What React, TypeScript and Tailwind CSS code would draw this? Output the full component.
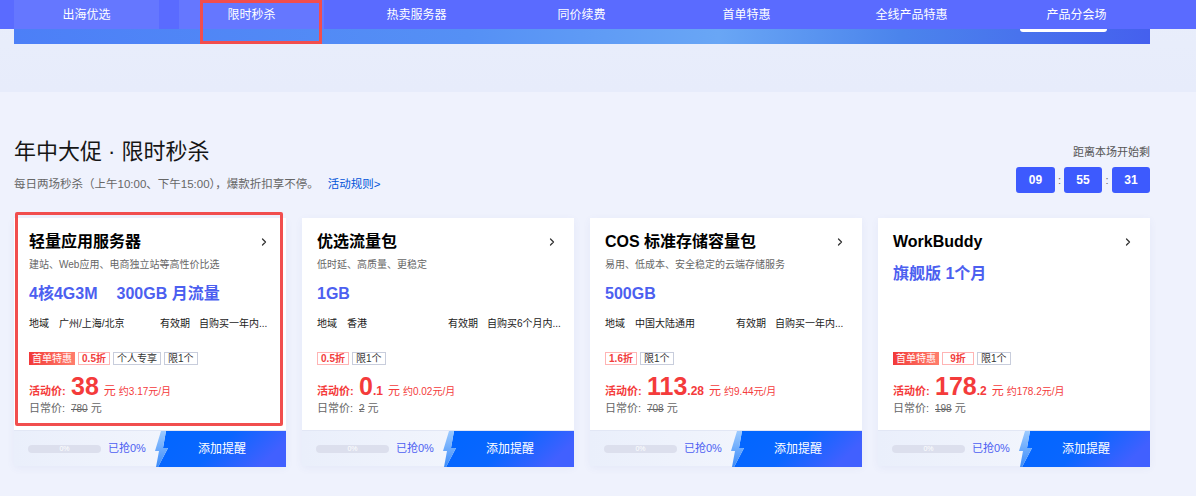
import React from 'react';
import { ChevronRight } from 'lucide-react';

type Tag = { text: string; kind: 'hot' | 'off' | 'plain' };

type Card = {
  title: string;
  desc?: string;
  specs: string[];
  region?: string;
  valid?: string;
  tags: Tag[];
  price: string;
  dec?: string;
  monthly: string;
  orig: string;
  marked?: boolean;
};

const navItems = ['出海优选', '限时秒杀', '热卖服务器', '同价续费', '首单特惠', '全线产品特惠', '产品分会场'];

const cards: Card[] = [
  {
    title: '轻量应用服务器',
    desc: '建站、Web应用、电商独立站等高性价比选',
    specs: ['4核4G3M', '300GB 月流量'],
    region: '广州/上海/北京',
    valid: '自购买一年内...',
    tags: [
      { text: '首单特惠', kind: 'hot' },
      { text: '0.5折', kind: 'off' },
      { text: '个人专享', kind: 'plain' },
      { text: '限1个', kind: 'plain' },
    ],
    price: '38',
    monthly: '约3.17元/月',
    orig: '780',
    marked: true,
  },
  {
    title: '优选流量包',
    desc: '低时延、高质量、更稳定',
    specs: ['1GB'],
    region: '香港',
    valid: '自购买6个月内...',
    tags: [
      { text: '0.5折', kind: 'off' },
      { text: '限1个', kind: 'plain' },
    ],
    price: '0',
    dec: '.1',
    monthly: '约0.02元/月',
    orig: '2',
  },
  {
    title: 'COS 标准存储容量包',
    desc: '易用、低成本、安全稳定的云端存储服务',
    specs: ['500GB'],
    region: '中国大陆通用',
    valid: '自购买一年内...',
    tags: [
      { text: '1.6折', kind: 'off' },
      { text: '限1个', kind: 'plain' },
    ],
    price: '113',
    dec: '.28',
    monthly: '约9.44元/月',
    orig: '708',
  },
  {
    title: 'WorkBuddy',
    specs: ['旗舰版 1个月'],
    tags: [
      { text: '首单特惠', kind: 'hot' },
      { text: '9折', kind: 'off' },
      { text: '限1个', kind: 'plain' },
    ],
    price: '178',
    dec: '.2',
    monthly: '约178.2元/月',
    orig: '198',
  },
];

function TagChip({ tag }: { tag: Tag }) {
  if (tag.kind === 'hot') {
    return (
      <span className="h-[13px] px-[3px] leading-[13px] text-[10px] text-white bg-gradient-to-r from-[#f2383a] to-[#ff7d6c]">
        {tag.text}
      </span>
    );
  }
  if (tag.kind === 'off') {
    return (
      <span className="h-[13px] min-w-[32px] px-[3px] text-center leading-[11px] text-[10px] font-bold text-[#f23d3d] border border-[#ffb4b4] bg-white">
        {tag.text}
      </span>
    );
  }
  return (
    <span className="h-[13px] min-w-[32px] px-[3px] text-center leading-[11px] text-[10px] text-[#333] border border-[#c8cddc] bg-white">
      {tag.text}
    </span>
  );
}

function RemindButton() {
  return (
    <div className="relative w-[131px] flex items-center justify-center">
      <svg className="absolute inset-0" width="131" height="36" viewBox="0 0 131 36">
        <defs>
          <linearGradient id="btn" x1="0" y1="0" x2="1" y2="0.3">
            <stop offset="0" stopColor="#0066ff" />
            <stop offset="0.55" stopColor="#0a66ff" />
            <stop offset="1" stopColor="#4160ff" />
          </linearGradient>
          <linearGradient id="bolt" x1="0" y1="0" x2="0" y2="1">
            <stop offset="0" stopColor="#9ccaff" />
            <stop offset="1" stopColor="#3d8cf9" />
          </linearGradient>
        </defs>
        <polygon points="11,0 131,0 131,36 3,36 13,17 8,17" fill="url(#btn)" />
        <polygon points="6,0 11,0 8,17 13,17 3,36 1,36 4,20 0,20" fill="url(#bolt)" />
      </svg>
      <span className="relative ml-[3px] text-[12px] text-white">添加提醒</span>
    </div>
  );
}

function ProductCard({ card }: { card: Card }) {
  return (
    <div className="relative w-[272px] bg-white shadow-[0_2px_8px_rgba(60,90,170,0.06)]">
      <div className="flex h-[212px] flex-col pl-[15px] pr-[16px] pt-[14px] pb-[15px]">
        <div className="flex h-[20px] items-center justify-between">
          <span className="text-[16px] font-bold leading-[20px] text-black">{card.title}</span>
          <ChevronRight size={12} strokeWidth={2.5} className="text-[#333]" />
        </div>
        {card.desc && (
          <div className="mt-[6px] text-[10px] leading-[14px] text-[#666]">{card.desc}</div>
        )}
        <div className="mt-[11px] flex h-[22px] items-center gap-[19px] text-[16px] font-bold text-[#4c5ff0]">
          {card.specs.map((s) => (
            <span key={s}>{s}</span>
          ))}
        </div>
        {card.region && (
          <div className="mt-[11px] flex h-[14px] items-center whitespace-nowrap text-[10px] text-[#1a1a1a]">
            <div className="flex flex-1 gap-[10px]">
              <span>地域</span>
              <span>{card.region}</span>
            </div>
            <div className="flex w-[110px] shrink-0 gap-[9px]">
              <span className="shrink-0">有效期</span>
              <span className="shrink-0">{card.valid}</span>
            </div>
          </div>
        )}
        <div className="mt-auto">
          <div className="flex gap-[3px]">
            {card.tags.map((t) => (
              <TagChip key={t.text} tag={t} />
            ))}
          </div>
          <div className="mt-[9px] flex h-[24px] items-baseline text-[#f43b3b]">
            <span className="w-[42px] text-[11px] font-bold">活动价:</span>
            <span className="text-[25px] font-bold leading-[24px]">{card.price}</span>
            {card.dec && <span className="text-[12px] font-bold">{card.dec}</span>}
            <span className="ml-[5px] text-[12px]">元</span>
            <span className="ml-[3px] text-[10px]">{card.monthly}</span>
          </div>
          <div className="mt-[3px] flex h-[14px] items-center text-[#666]">
            <span className="w-[42px] text-[11px]">日常价:</span>
            <span className="text-[10px] line-through">{card.orig}</span>
            <span className="ml-[3px] text-[11px]">元</span>
          </div>
        </div>
      </div>
      <div className="flex h-[36px] border-t border-[#e2e7f5] bg-gradient-to-r from-[#eaeffb] to-[#f7f9fe]">
        <div className="flex flex-1 items-center pl-[14px]">
          <div className="flex h-[8px] w-[73px] items-center justify-center rounded-full bg-[#dcdfed] text-[7px] leading-[8px] text-white">
            0%
          </div>
          <span className="ml-[7px] text-[11px] text-[#4d5ff2]">已抢0%</span>
        </div>
        <RemindButton />
      </div>
      {card.marked && (
        <div className="pointer-events-none absolute left-[1px] top-[-6px] h-[214px] w-[268px] rounded-[2px] border-[3px] border-[#f14e4e]" />
      )}
    </div>
  );
}

export default function App() {
  return (
    <div className="h-[496px] w-[1196px] overflow-hidden bg-[#eff2fd] font-[family-name:'Liberation_Sans','Noto_Sans_CJK_SC',sans-serif]">
      {/* top nav + banner */}
      <div className="h-[92px] bg-gradient-to-b from-[#e9eefb] to-[#e7ecfb]">
        <div className="relative flex h-[29px] gap-[20px] bg-[#5a6bff] pl-[14px]">
          {navItems.map((item, i) => (
            <div
              key={item}
              className={`flex w-[145px] items-center justify-center text-[12px] text-white ${i < 2 ? 'bg-[#6577ff]' : ''}`}
            >
              {item}
            </div>
          ))}
          <div className="pointer-events-none absolute left-[200px] top-0 h-[44px] w-[122px] border-[3px] border-[#f24d4d] z-10" />
        </div>
        <div className="relative ml-[14px] h-[15px] w-[1136px] bg-[linear-gradient(90deg,#4c7ff7_0%,#5590f5_40%,#69a6f5_62%,#4b84ec_78%,#4560ee_100%)]">
          <div className="absolute left-[1006px] top-0 h-[3px] w-[87px] rounded-b-[8px] bg-white" />
        </div>
      </div>

      {/* section */}
      <div className="ml-[14px] w-[1136px]">
        <div className="flex items-start justify-between">
          <div className="pt-[45px]">
            <h1 className="text-[22px] leading-[30px] text-[#161616]">年中大促 · 限时秒杀</h1>
            <p className="mt-[9px] text-[11.5px] leading-[16px] text-[#666]">
              每日两场秒杀（上午10:00、下午15:00），爆款折扣享不停。
              <span className="ml-[9px] text-[#0052d9]">活动规则&gt;</span>
            </p>
          </div>
          <div className="flex flex-col items-end pt-[53px]">
            <span className="text-[11px] leading-[14px] text-[#555]">距离本场开始剩</span>
            <div className="mt-[8px] flex items-center">
              <span className="flex h-[26px] w-[39px] items-center justify-center rounded-[3px] bg-[#3d5afe] text-[12px] font-bold text-white">09</span>
              <span className="w-[9px] text-center text-[11px] text-[#666]">:</span>
              <span className="flex h-[26px] w-[38px] items-center justify-center rounded-[3px] bg-[#3d5afe] text-[12px] font-bold text-white">55</span>
              <span className="w-[10px] text-center text-[11px] text-[#666]">:</span>
              <span className="flex h-[26px] w-[38px] items-center justify-center rounded-[3px] bg-[#3d5afe] text-[12px] font-bold text-white">31</span>
            </div>
          </div>
        </div>

        <div className="mt-[25px] flex gap-[16px]">
          {cards.map((c) => (
            <ProductCard key={c.title} card={c} />
          ))}
        </div>
      </div>
    </div>
  );
}
